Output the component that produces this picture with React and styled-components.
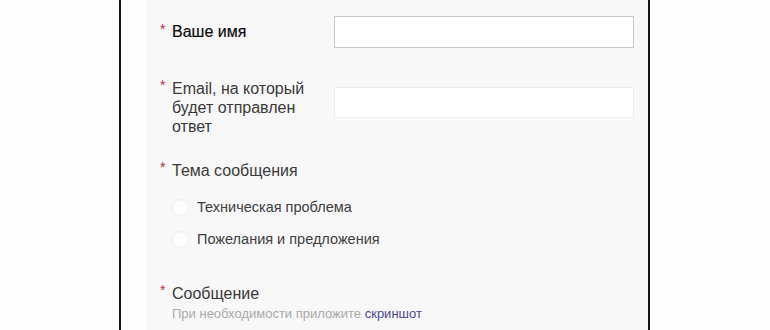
import React from "react";
import styled, { createGlobalStyle } from "styled-components";

const Global = createGlobalStyle`
  html, body { margin: 0; padding: 0; background: #fefefe; }
  body { font-family: "Liberation Sans", Arial, sans-serif; }
`;

const Frame = styled.div`
  margin-left: 119px;
  width: 527px;
  height: 330px;
  border-left: 2px solid #151515;
  border-right: 2px solid #151515;
  background: #fefefe;
  display: flex;
  overflow: hidden;
`;

const Panel = styled.div`
  margin-left: 26px;
  flex: 1;
  background: #f8f8f8;
  padding: 16px 0 0 13px;
  display: flex;
  flex-direction: column;
`;

const Row = styled.div`
  display: grid;
  grid-template-columns: 174px 300px;
  align-items: start;
  margin-top: ${(p) => p.$top || 0}px;
`;

const Label = styled.div`
  display: flex;
  align-items: flex-start;
  font-size: 16px;
  line-height: 19px;
  color: ${(p) => (p.$strong ? "#0a0a0a" : "#3a3a3a")};
  -webkit-text-stroke: ${(p) => (p.$strong ? "0.2px #0a0a0a" : "0")};
  padding-top: ${(p) => p.$pad || 0}px;
`;

const Star = styled.span`
  color: #b8323e;
  font-size: 14px;
  line-height: 14px;
  width: 12px;
  flex: none;
  margin-top: ${(p) => p.$top ?? -1}px;
  -webkit-text-stroke: 0;
`;

const Input = styled.div`
  width: 300px;
  height: ${(p) => p.$h}px;
  box-sizing: border-box;
  background: #fff;
  border: 1px solid ${(p) => p.$border};
  margin-top: ${(p) => p.$top || 0}px;
`;

const Radios = styled.div`
  display: flex;
  flex-direction: column;
  gap: 8px;
  margin-top: 15px;
  padding-left: 12px;
`;

const Radio = styled.label`
  display: flex;
  align-items: center;
  height: 24px;
  font-size: 14.5px;
  color: #404040;
`;

const Circle = styled.span`
  width: 17px;
  height: 17px;
  border-radius: 50%;
  background: #fdfdfd;
  border: 1px solid #efefef;
  box-sizing: border-box;
  margin-right: 8px;
  flex: none;
`;

const Hint = styled.div`
  font-size: 13px;
  line-height: 16px;
  color: #a9a9a9;
  padding-left: 12px;
  margin-top: 3px;
`;

const Link = styled.a`
  color: #4b4a8c;
  text-decoration: none;
`;

export default function App() {
  return (
    <>
      <Global />
      <Frame>
        <Panel>
          <Row>
            <Label $strong $pad={6}>
              <Star $top={0}>*</Star>Ваше имя
            </Label>
            <Input $h={32} $border="#c7c7c7" />
          </Row>
          <Row $top={31}>
            <Label>
              <Star>*</Star>
              <span>
                Email, на который
                <br />
                будет отправлен
                <br />
                ответ
              </span>
            </Label>
            <Input $h={31} $top={8} $border="#ececec" />
          </Row>
          <Row $top={25}>
            <Label>
              <Star>*</Star>Тема сообщения
            </Label>
          </Row>
          <Radios>
            <Radio>
              <Circle />
              Техническая проблема
            </Radio>
            <Radio>
              <Circle />
              Пожелания и предложения
            </Radio>
          </Radios>
          <Row $top={33}>
            <Label>
              <Star>*</Star>Сообщение
            </Label>
          </Row>
          <Hint>
            При необходимости приложите <Link href="#">скриншот</Link>
          </Hint>
        </Panel>
      </Frame>
    </>
  );
}
